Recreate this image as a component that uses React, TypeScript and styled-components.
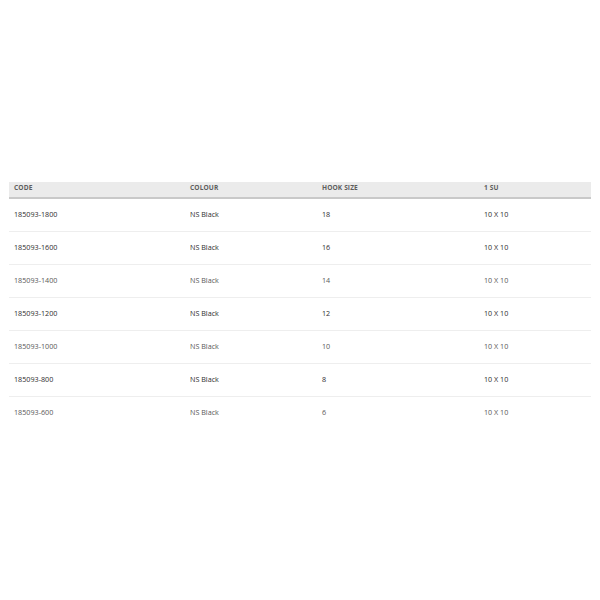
import { FC } from "react"
import styled, { createGlobalStyle } from "styled-components"

const GlobalStyle = createGlobalStyle`
  html, body {
    margin: 0;
    padding: 0;
    background: #ffffff;
  }
  body {
    font-family: "Open Sans", "Liberation Sans", sans-serif;
  }
`

const Page = styled.div`
  width: 600px;
  height: 600px;
  padding: 182px 9px 0 9px;
  box-sizing: border-box;
`

const Table = styled.div`
  width: 582px;
  display: flex;
  flex-direction: column;
`

const columns = "176px 132px 162px 112px"

const HeadRow = styled.div`
  display: grid;
  grid-template-columns: ${columns};
  height: 15px;
  background-color: #ebebeb;
  border-bottom: 2px solid #c9c9c9;
`

const HeadCell = styled.div`
  padding: 2px 0 0 5px;
  font-size: 6.6px;
  font-weight: 700;
  line-height: 8px;
  color: #5e5e5e;
  letter-spacing: 0.1px;
`

const Row = styled.div<{ $last?: boolean }>`
  display: grid;
  grid-template-columns: ${columns};
  height: 32px;
  align-items: center;
  border-bottom: 1px solid ${({ $last }) => ($last ? "transparent" : "#eeeeee")};
`

const Cell = styled.div<{ $light?: boolean }>`
  padding: 0 0 2px 5px;
  font-size: 7.2px;
  line-height: 10px;
  color: ${({ $light }) => ($light ? "#595959" : "#2e2e2e")};
`

const rows = [
  { code: "185093-1800", size: "18", light: false },
  { code: "185093-1600", size: "16", light: false },
  { code: "185093-1400", size: "14", light: true },
  { code: "185093-1200", size: "12", light: false },
  { code: "185093-1000", size: "10", light: true },
  { code: "185093-800", size: "8", light: false },
  { code: "185093-600", size: "6", light: true },
]

const App: FC = () => {
  return (
    <Page>
      <GlobalStyle />
      <Table>
        <HeadRow>
          <HeadCell>CODE</HeadCell>
          <HeadCell>COLOUR</HeadCell>
          <HeadCell>HOOK SIZE</HeadCell>
          <HeadCell>1 SU</HeadCell>
        </HeadRow>
        {rows.map((r, i) => (
          <Row key={r.code} $last={i === rows.length - 1}>
            <Cell $light={r.light}>{r.code}</Cell>
            <Cell $light={r.light}>NS Black</Cell>
            <Cell $light={r.light}>{r.size}</Cell>
            <Cell $light={r.light}>10 X 10</Cell>
          </Row>
        ))}
      </Table>
    </Page>
  )
}

export default App
